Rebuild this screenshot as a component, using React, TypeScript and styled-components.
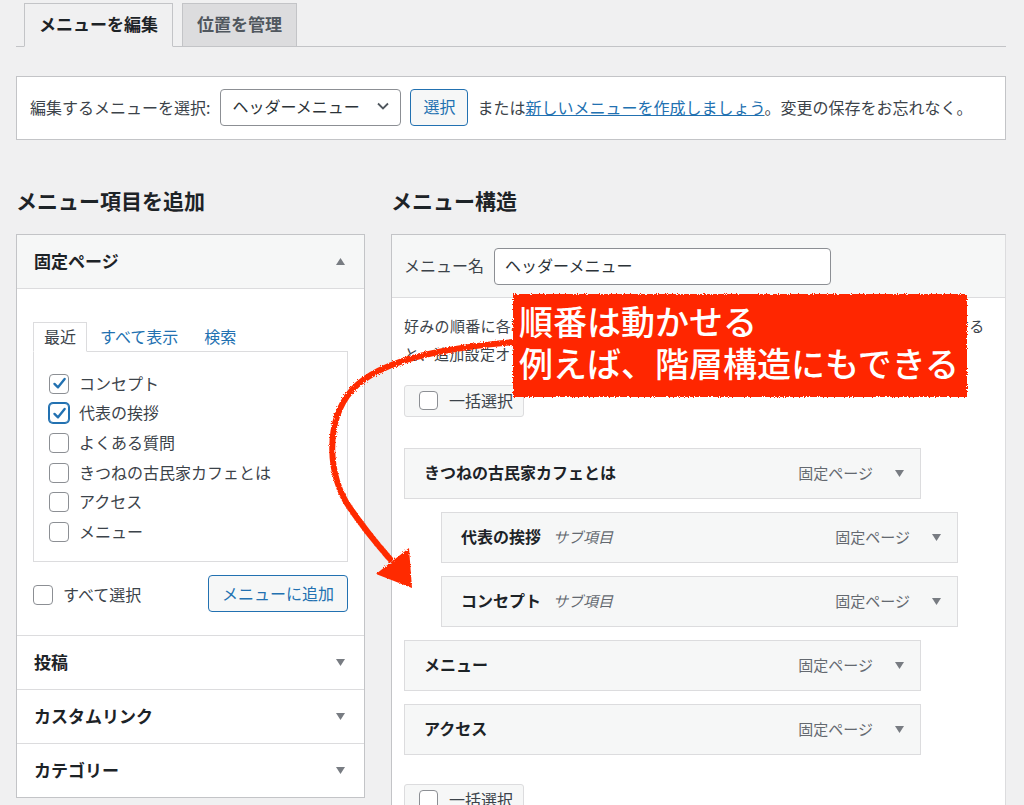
import React from "react"
import styled, { createGlobalStyle, css } from "styled-components"

const GlobalStyle = createGlobalStyle`
  body {
    margin: 0;
    background: #f0f0f1;
    font-family: "Noto Sans CJK JP", "Noto Sans", sans-serif;
    color: #3c434a;
  }
  input {
    font-family: inherit;
  }
`

const Page = styled.div`
  position: relative;
  width: 1024px;
  height: 805px;
  overflow: hidden;
  box-sizing: border-box;
  padding: 3px 18px 0 16px;
`

const TabBar = styled.div`
  display: flex;
  align-items: flex-end;
  gap: 9px;
  padding-left: 8px;
  border-bottom: 1px solid #c3c4c7;
`

const NavTab = styled.div<{ $active?: boolean }>`
  height: 44px;
  box-sizing: border-box;
  margin-bottom: -1px;
  padding: 0 14px 4px;
  display: flex;
  align-items: center;
  font-size: 17px;
  font-weight: 700;
  border: 1px solid #c3c4c7;
  background: ${p => (p.$active ? "#f0f0f1" : "#dcdcde")};
  border-bottom-color: ${p => (p.$active ? "#f0f0f1" : "#c3c4c7")};
  color: ${p => (p.$active ? "#1d2327" : "#50575e")};
`

const ManageBar = styled.div`
  margin-top: 29px;
  height: 64px;
  box-sizing: border-box;
  background: #fff;
  border: 1px solid #c3c4c7;
  padding: 0 13px 2px;
  display: flex;
  align-items: center;
  font-size: 16px;
`

const SelectBox = styled.div`
  margin-left: 10px;
  width: 181px;
  height: 37px;
  box-sizing: border-box;
  border: 1px solid #8c8f94;
  border-radius: 4px;
  background: #fff;
  padding: 0 11px 2px;
  display: flex;
  align-items: center;
  justify-content: space-between;
  color: #2c3338;
`

const Button = styled.div`
  height: 37px;
  box-sizing: border-box;
  padding: 0 13px 2px;
  display: flex;
  align-items: center;
  border: 1px solid #2271b1;
  border-radius: 4px;
  background: #f6f7f7;
  color: #2271b1;
  font-size: 16px;
`

const SelectButton = styled(Button)`
  margin-left: 9px;
  padding: 0 12px 2px;
`

const ManageNote = styled.span`
  margin-left: 9px;
  a {
    color: #2271b1;
    text-decoration: underline;
  }
`

const Columns = styled.div`
  display: flex;
  gap: 26px;
`

const LeftColumn = styled.div`
  width: 349px;
  flex-shrink: 0;
`

const RightColumn = styled.div`
  flex: 1;
`

const ColumnTitle = styled.h2`
  margin: 0 0 19px;
  padding-top: 45px;
  line-height: 30px;
  font-size: 21px;
  font-weight: 700;
  color: #1d2327;
`

const SidePanel = styled.div`
  background: #fff;
  border: 1px solid #c3c4c7;
`

const AccordionHeader = styled.div<{ $open?: boolean }>`
  height: 54px;
  box-sizing: border-box;
  padding: 0 19px 3px 17px;
  display: flex;
  align-items: center;
  justify-content: space-between;
  background: ${p => (p.$open ? "#f6f7f7" : "#fff")};
  border-bottom: 1px solid #dcdcde;
  font-size: 17px;
  font-weight: 700;
  color: #1d2327;
  svg {
    margin-top: 3px;
  }
  &:last-child {
    border-bottom: none;
    height: 53px;
  }
`

const AccordionBody = styled.div`
  padding: 33px 16px 23px;
  border-bottom: 1px solid #dcdcde;
`

const ItemTabs = styled.div`
  display: flex;
  font-size: 16px;
`

const ItemTab = styled.div<{ $active?: boolean }>`
  height: 30px;
  box-sizing: border-box;
  padding: 0 10px;
  line-height: 26px;
  margin-bottom: -1px;
  position: relative;
  border: 1px solid transparent;
  ${p =>
    p.$active
      ? css`
          border-color: #dcdcde;
          border-bottom-color: #fff;
          background: #fff;
          color: #3c434a;
        `
      : css`
          color: #2271b1;
          padding: 0 12px;
        `}
`

const ItemList = styled.div`
  height: 211px;
  box-sizing: border-box;
  border: 1px solid #dcdcde;
  padding: 16px 0 0 15px;
`

const CheckRow = styled.label`
  height: 29.6px;
  display: flex;
  align-items: center;
  gap: 10px;
  font-size: 16px;
  line-height: 20px;
`

const Box = styled.span<{ $focus?: boolean }>`
  width: 20px;
  height: 20px;
  box-sizing: border-box;
  flex-shrink: 0;
  border: 1px solid #8c8f94;
  border-radius: 4px;
  background: #fff;
  display: flex;
  align-items: center;
  justify-content: center;
  margin-top: 2px;
  ${p =>
    p.$focus &&
    css`
      border-color: #2271b1;
      box-shadow: 0 0 0 1px #2271b1;
    `}
`

const AddRow = styled.div`
  margin-top: 13px;
  height: 37px;
  display: flex;
  align-items: center;
  justify-content: space-between;
`

const StructurePanel = styled.div`
  background: #fff;
  border: 1px solid #c3c4c7;
  border-right-color: #dcdcde;
  height: 700px;
`

const StructureHead = styled.div`
  height: 63px;
  box-sizing: border-box;
  background: #f6f7f7;
  border-bottom: 1px solid #dcdcde;
  padding-left: 12px;
  display: flex;
  align-items: center;
  gap: 10px;
  font-size: 16px;
  span {
    margin-top: -3px;
  }
`

const NameInput = styled.input`
  width: 337px;
  height: 37px;
  box-sizing: border-box;
  border: 1px solid #8c8f94;
  border-radius: 4px;
  padding: 0 10px 2px;
  font-size: 16px;
  color: #2c3338;
  background: #fff;
  outline: none;
`

const StructureBody = styled.div`
  padding: 14px 12px 0;
`

const Instructions = styled.p`
  margin: 0 0 2px;
  font-size: 15px;
  letter-spacing: 0.3px;
  line-height: 28px;
  white-space: nowrap;
`

const BulkButton = styled.div<{ $gap: number }>`
  margin-top: ${p => p.$gap}px;
  width: 120px;
  height: 32px;
  box-sizing: border-box;
  padding: 0 0 2px 14px;
  display: flex;
  align-items: center;
  gap: 11px;
  background: #f6f7f7;
  border: 1px solid #dcdcde;
  border-radius: 3px;
  font-size: 16px;
  span {
    margin-top: 0;
    width: 19px;
    height: 19px;
  }
`

const MenuList = styled.div`
  margin-top: 31px;
  display: flex;
  flex-direction: column;
  gap: 13px;
`

const MenuItem = styled.div<{ $depth: number }>`
  width: 517px;
  height: 51px;
  box-sizing: border-box;
  margin-left: ${p => p.$depth * 37}px;
  padding: 0 16px 3px 19px;
  display: flex;
  align-items: center;
  background: #f6f7f7;
  border: 1px solid #dcdcde;
  svg {
    margin-top: 3px;
  }
`

const ItemTitle = styled.span`
  font-size: 16px;
  font-weight: 700;
  color: #1d2327;
`

const SubLabel = styled.span`
  margin-left: 12px;
  font-size: 15px;
  font-style: italic;
  color: #646970;
`

const ItemType = styled.span`
  margin-left: auto;
  margin-right: 22px;
  font-size: 15px;
  color: #646970;
`

const Callout = styled.div`
  position: absolute;
  left: 512px;
  top: 293px;
  width: 456px;
  height: 105px;
  box-sizing: border-box;
  padding: 7px 7px;
  color: #fff;
  font-size: 34px;
  font-weight: 500;
  line-height: 42px;
  white-space: nowrap;
  svg {
    position: absolute;
    inset: 0;
  }
  span {
    position: relative;
    display: block;
  }
`

const Overlay = styled.svg`
  position: absolute;
  left: 0;
  top: 0;
  pointer-events: none;
`

const Caret = ({ up }: { up?: boolean }) => (
  <svg width="9" height="7" viewBox="0 0 9 7">
    <polygon points={up ? "0,7 9,7 4.5,0" : "0,0 9,0 4.5,7"} fill="#787c82" />
  </svg>
)

const Check = ({ checked, focus }: { checked?: boolean; focus?: boolean }) => (
  <Box $focus={focus}>
    {checked && (
      <svg width="15" height="15" viewBox="0 0 14 14">
        <path d="M2.3 7.4 L5.6 10.6 L11.8 2.8" fill="none" stroke="#2271b1" strokeWidth="2.2" strokeLinecap="round" strokeLinejoin="round" />
      </svg>
    )}
  </Box>
)

const recent = [
  { label: "コンセプト", checked: true },
  { label: "代表の挨拶", checked: true, focus: true },
  { label: "よくある質問" },
  { label: "きつねの古民家カフェとは" },
  { label: "アクセス" },
  { label: "メニュー" },
]

const menuItems = [
  { title: "きつねの古民家カフェとは", depth: 0 },
  { title: "代表の挨拶", depth: 1 },
  { title: "コンセプト", depth: 1 },
  { title: "メニュー", depth: 0 },
  { title: "アクセス", depth: 0 },
]

const App = () => {
  return (
    <Page>
      <GlobalStyle />
      <TabBar>
        <NavTab $active>メニューを編集</NavTab>
        <NavTab>位置を管理</NavTab>
      </TabBar>

      <ManageBar>
        編集するメニューを選択:
        <SelectBox>
          ヘッダーメニュー
          <svg width="12" height="8" viewBox="0 0 12 8">
            <path d="M1 1.5 L6 6.5 L11 1.5" fill="none" stroke="#50575e" strokeWidth="1.8" />
          </svg>
        </SelectBox>
        <SelectButton>選択</SelectButton>
        <ManageNote>
          または<a>新しいメニューを作成しましょう</a>。変更の保存をお忘れなく。
        </ManageNote>
      </ManageBar>

      <Columns>
        <LeftColumn>
          <ColumnTitle>メニュー項目を追加</ColumnTitle>
          <SidePanel>
            <AccordionHeader $open>
              固定ページ
              <Caret up />
            </AccordionHeader>
            <AccordionBody>
              <ItemTabs>
                <ItemTab $active>最近</ItemTab>
                <ItemTab>すべて表示</ItemTab>
                <ItemTab>検索</ItemTab>
              </ItemTabs>
              <ItemList>
                {recent.map(r => (
                  <CheckRow key={r.label}>
                    <Check checked={r.checked} focus={r.focus} />
                    {r.label}
                  </CheckRow>
                ))}
              </ItemList>
              <AddRow>
                <CheckRow>
                  <Check />
                  すべて選択
                </CheckRow>
                <Button>メニューに追加</Button>
              </AddRow>
            </AccordionBody>
            <AccordionHeader>
              投稿
              <Caret />
            </AccordionHeader>
            <AccordionHeader>
              カスタムリンク
              <Caret />
            </AccordionHeader>
            <AccordionHeader>
              カテゴリー
              <Caret />
            </AccordionHeader>
          </SidePanel>
        </LeftColumn>

        <RightColumn>
          <ColumnTitle>メニュー構造</ColumnTitle>
          <StructurePanel>
            <StructureHead>
              <span>メニュー名</span>
              <NameInput defaultValue="ヘッダーメニュー" />
            </StructureHead>
            <StructureBody>
              <Instructions>
                好みの順番に各項目をドラッグしてください。項目の右側にある矢印をクリックする
                <br />
                と、追加設定オプションが表示されます。
              </Instructions>
              <BulkButton $gap={17}>
                <Check />
                一括選択
              </BulkButton>
              <MenuList>
                {menuItems.map(m => (
                  <MenuItem key={m.title} $depth={m.depth}>
                    <ItemTitle>{m.title}</ItemTitle>
                    {m.depth > 0 && <SubLabel>サブ項目</SubLabel>}
                    <ItemType>固定ページ</ItemType>
                    <Caret />
                  </MenuItem>
                ))}
              </MenuList>
              <BulkButton $gap={29}>
                <Check />
                一括選択
              </BulkButton>
            </StructureBody>
          </StructurePanel>
        </RightColumn>
      </Columns>

      <Callout>
        <svg width="456" height="105" viewBox="0 0 456 105">
          <defs>
            <filter id="calloutRough" x="-5%" y="-10%" width="110%" height="120%">
              <feTurbulence type="fractalNoise" baseFrequency="0.8" numOctaves="2" result="noise" />
              <feDisplacementMap in="SourceGraphic" in2="noise" scale="4" />
            </filter>
          </defs>
          <rect x="1" y="1" width="454" height="103" fill="#ff2600" filter="url(#calloutRough)" />
        </svg>
        <span>順番は動かせる</span>
        <span>例えば、階層構造にもできる</span>
      </Callout>

      <Overlay width="1024" height="805" viewBox="0 0 1024 805">
        <defs>
          <filter id="arrowRough" x="-10%" y="-10%" width="120%" height="120%">
            <feTurbulence type="fractalNoise" baseFrequency="0.9" numOctaves="2" result="noise" />
            <feDisplacementMap in="SourceGraphic" in2="noise" scale="3.5" />
          </filter>
        </defs>
        <g filter="url(#arrowRough)">
          <path
            d="M514 342 C455 347 382 357 352 390 C324 422 328 478 350 508 C363 527 376 543 390 559"
            fill="none"
            stroke="#ff2a00"
            strokeWidth="6"
            strokeLinecap="round"
          />
          <polygon points="409,548 376,574 412,588" fill="#ff2a00" />
        </g>
      </Overlay>
    </Page>
  )
}

export default App
